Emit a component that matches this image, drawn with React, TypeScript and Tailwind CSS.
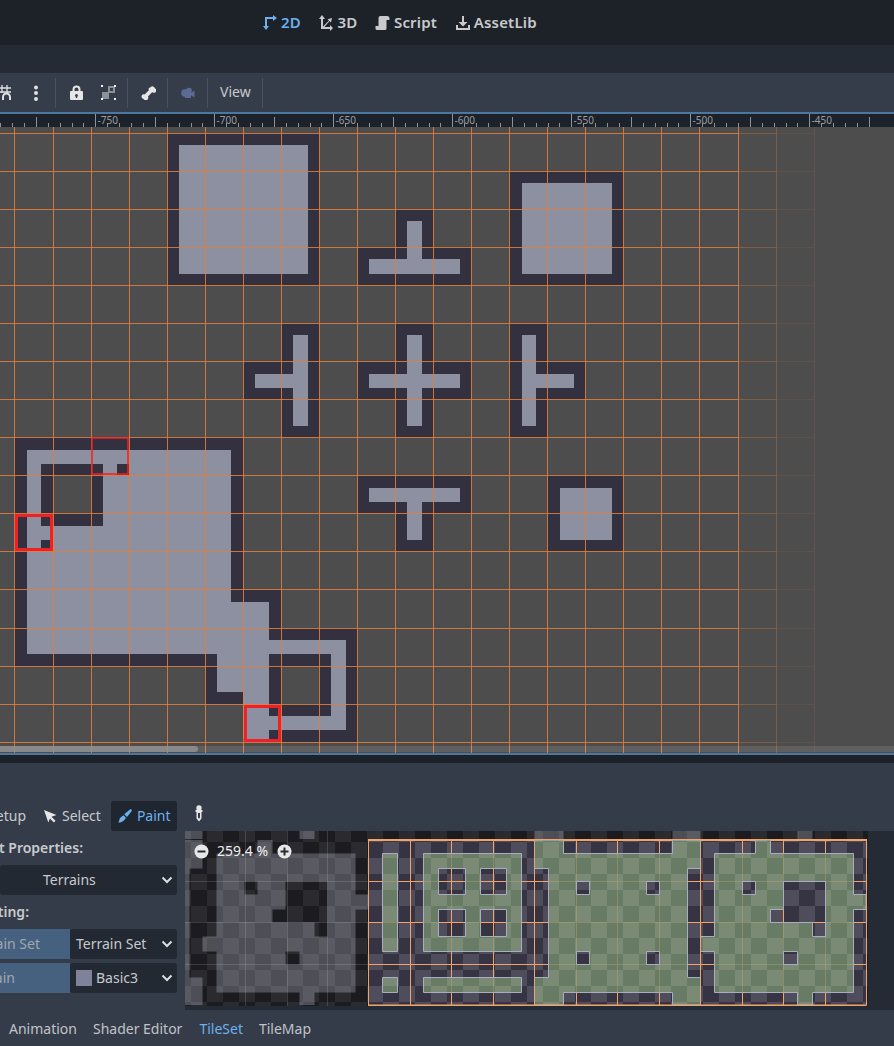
import type { ReactNode } from "react";

const gridX = [14, 53, 91, 129, 167, 205, 243, 281, 319, 357, 395, 433, 471, 509, 547, 585, 623, 661, 699, 738];
const gridY = [133, 171, 209, 247, 285, 323, 361, 399, 437, 475, 513, 551, 589, 628, 666, 704, 742];
const sheetX = [368, 410, 451, 493, 534, 576, 617, 659, 700, 742, 783, 825, 866];
const sheetY = [840, 881, 922, 964, 1005];

const DARK = "#33303f";
const LIGHT = "#8d90a0";
const ORANGE = "#e07c3c";

// [x1, y1, x2, y2]
const darkRects = [
  [167, 133, 319, 285],
  [395, 209, 433, 247],
  [357, 247, 471, 285],
  [509, 171, 623, 285],
  [281, 323, 319, 437],
  [243, 361, 281, 399],
  [395, 323, 433, 437],
  [357, 361, 471, 399],
  [509, 323, 547, 437],
  [547, 361, 585, 399],
  [357, 475, 471, 513],
  [395, 513, 433, 551],
  [547, 475, 623, 551],
  [14, 437, 243, 666],
  [243, 590, 281, 742],
  [205, 666, 243, 704],
  [269, 628, 357, 742],
];
const lightRects = [
  [179, 145, 308, 274],
  [407, 221, 422, 259],
  [369, 259, 460, 274],
  [522, 183, 612, 274],
  [293, 335, 308, 426],
  [255, 374, 293, 388],
  [407, 335, 422, 426],
  [369, 374, 460, 388],
  [522, 335, 536, 426],
  [536, 374, 574, 388],
  [369, 488, 460, 502],
  [407, 502, 422, 540],
  [560, 488, 612, 540],
  [27, 450, 231, 654],
  [231, 602, 269, 654],
  [217, 654, 269, 692],
  [243, 692, 269, 739],
  [269, 640, 346, 654],
  [331, 654, 346, 730],
  [269, 716, 346, 730],
];
const innerDark = [
  [41, 464, 103, 526],
  [269, 654, 331, 716],
  [117, 464, 129, 475],
  [41, 540, 53, 551],
];
const innerBg = [
  [53, 475, 91, 513],
  [281, 666, 319, 704],
];

const shapeE =
  "M534.5 840H563.5V853.5H672.5V840H700.5V868.5H687.5V977.5H700.5V1005H672.5V992.5H563.5V1005H534.5V977.5H548.5V868.5H534.5Z" +
  "M576.5 881.5H589.5V894.5H576.5Z M576.5 951.5H589.5V964.5H576.5Z M646.5 881.5H659.5V894.5H646.5Z M646.5 951.5H659.5V964.5H646.5Z";
const shapeF =
  "M714.5 853.5H755.5V840H770.5V853.5H853.5V894.5H866V909.5H853.5V992.5H812.5V1005H797.5V992.5H714.5V951.5H700.5V936.5H714.5Z" +
  "M742.5 881.5H755.5V894.5H742.5Z M783.5 881.5H825.5V936.5H812.5V922.5H770.5V909.5H783.5Z M783.5 951.5H797.5V964.5H783.5Z";
const shapesLeft =
  "M382.5 853.5H397.5V951.5H382.5Z M382.5 977.5H397.5V992.5H382.5Z M423.5 977.5H521.5V992.5H423.5Z" +
  "M423.5 853.5H521.5V951.5H423.5Z M438.5 868.5H465.5V894.5H438.5Z M480.5 868.5H506.5V894.5H480.5Z M438.5 909.5H465.5V936.5H438.5Z M480.5 909.5H506.5V936.5H480.5Z";

function Box({ r, fill }: { r: number[]; fill: string }) {
  return <rect x={r[0]} y={r[1]} width={r[2] - r[0]} height={r[3] - r[1]} fill={fill} />;
}

function Checker({ id, a, b, x = 383, y = 842 }: { id: string; a: string; b: string; x?: number; y?: number }) {
  return (
    <pattern id={id} patternUnits="userSpaceOnUse" x={x} y={y} width="32" height="32">
      <rect width="32" height="32" fill={b} />
      <rect width="16" height="16" fill={a} />
      <rect x="16" y="16" width="16" height="16" fill={a} />
    </pattern>
  );
}

function Ruler() {
  const ticks = Array.from({ length: 76 }, (_, i) => i);
  const labels = ["-750", "-700", "-650", "-600", "-550", "-500", "-450"];
  return (
    <svg width="894" height="13" viewBox="0 0 894 13" className="bg-[#1c2229]">
      {ticks.map((i) => {
        const x = Math.round(-23.7 + i * 11.9);
        const h = i % 10 === 0 ? 13 : i % 5 === 0 ? 10 : 4;
        return <rect key={i} x={x} y={13 - h} width="1" height={h} fill="#8f9297" />;
      })}
      {labels.map((t, i) => (
        <text key={t} x={97.5 + i * 119} y="10" fontSize="10" fill="#9a9da2" fontFamily="Noto Sans">
          {t}
        </text>
      ))}
    </svg>
  );
}

function Canvas() {
  return (
    <svg width="894" height="626" viewBox="0 127 894 626" className="bg-[#4d4d4d]">
      {darkRects.map((r, i) => <Box key={i} r={r} fill={DARK} />)}
      {lightRects.map((r, i) => <Box key={i} r={r} fill={LIGHT} />)}
      {innerDark.map((r, i) => <Box key={i} r={r} fill={DARK} />)}
      {innerBg.map((r, i) => <Box key={i} r={r} fill="#4d4d4d" />)}

      {gridX.map((x) => <rect key={x} x={x} y="127" width="1" height="626" fill={ORANGE} opacity="0.88" />)}
      <rect x="776" y="127" width="1" height="626" fill={ORANGE} opacity="0.35" />
      <rect x="814" y="127" width="1" height="626" fill={ORANGE} opacity="0.1" />
      {gridY.map((y) => (
        <g key={y}>
          <rect x="0" y={y} width="738" height="1" fill={ORANGE} opacity="0.88" />
          <rect x="738" y={y} width="38" height="1" fill={ORANGE} opacity="0.35" />
          <rect x="776" y={y} width="38" height="1" fill={ORANGE} opacity="0.1" />
        </g>
      ))}

      <rect x="92" y="438" width="36" height="36" fill="none" stroke="#ee2028" strokeWidth="1.5" />
      <rect x="16.5" y="515.5" width="35" height="34" fill="none" stroke="#ee2028" strokeWidth="3" />
      <rect x="245.5" y="706.5" width="34" height="34" fill="none" stroke="#ee2028" strokeWidth="3" />
    </svg>
  );
}

function TileView() {
  return (
    <svg width="709" height="179" viewBox="185 831 709 179" className="bg-[#252b34]">
      <defs>
        <Checker id="sheetDark" a="#4f4d5c" b="#363342" />
        <Checker id="sheetGreen" a="#82967a" b="#72896a" />
        <Checker id="dimDark" a="#2b2a2e" b="#1c1c20" />
        <Checker id="dimLightShift" a="#5a5b62" b="#4e4f56" x={881} />
        <Checker id="dimLightUp" a="#5a5b62" b="#4e4f56" y={1008} />
        <Checker id="dimLightUpShift" a="#5a5b62" b="#4e4f56" x={881} y={1008} />
        <clipPath id="topStrip"><rect x="185" y="831" width="682" height="9" /></clipPath>
      </defs>

      {/* dimmed part of the atlas, outside the selected sheet */}
      <rect x="185" y="831" width="683" height="175" fill="url(#dimDark)" />
      <g transform="translate(-498 0)" fillRule="evenodd">
        <path d={shapeE} fill="url(#dimLightShift)" />
        <path d={shapeF} fill="url(#dimLightShift)" />
      </g>
      <g clipPath="url(#topStrip)">
        <g transform="translate(0 -166)" fillRule="evenodd">
          <path d={shapeE} fill="url(#dimLightUp)" />
          <path d={shapeF} fill="url(#dimLightUp)" />
        </g>
        <g transform="translate(-498 -166)" fillRule="evenodd">
          <path d={shapeE} fill="url(#dimLightUpShift)" />
          <path d={shapeF} fill="url(#dimLightUpShift)" />
        </g>
      </g>
      {[245, 287, 327].map((x) => <rect key={x} x={x} y="831" width="1" height="175" fill="#ffffff" opacity="0.14" />)}
      {[881, 922, 964].map((y) => <rect key={y} x="185" y={y} width="183" height="1" fill="#ffffff" opacity="0.14" />)}

      {/* the sheet itself */}
      <rect x="368" y="840" width="498" height="165" fill="url(#sheetDark)" />
      {sheetX.map((x) => <rect key={x} x={x} y="840" width="1" height="165" fill="#f2a468" />)}
      {sheetY.map((y) => <rect key={y} x="368" y={y} width="498" height="1" fill="#f2a468" />)}
      <path d={shapesLeft + shapeE + shapeF} fill="url(#sheetGreen)" fillOpacity="0.84" fillRule="evenodd" stroke="#a9adc0" strokeWidth="1" />
      <rect x="368.5" y="839.5" width="498" height="165.5" fill="none" stroke="#f2a468" />
      <rect x="534" y="840" width="1" height="165" fill="#f2a468" opacity="0.7" />
      <rect x="700" y="840" width="1" height="165" fill="#f2a468" opacity="0.7" />
    </svg>
  );
}

function Chevron() {
  return (
    <svg width="12" height="8" viewBox="0 0 12 8" className="shrink-0">
      <path d="M1.5 1.5 6 6l4.5-4.5" fill="none" stroke="#dcdde0" strokeWidth="2" />
    </svg>
  );
}

function Select({ children, className }: { children: ReactNode; className: string }) {
  return (
    <div className={"flex items-center h-[30px] bg-[#222932] rounded-[3px] text-[#c8cacd] text-[14px] " + className}>
      {children}
    </div>
  );
}

function TopTab({ icon, label, active }: { icon: ReactNode; label: string; active?: boolean }) {
  return (
    <div className={"flex items-center gap-[3px] text-[15px] tracking-[0.2px] font-semibold " + (active ? "text-[#6cb0ee]" : "text-[#c8cacd]")}>
      {icon}
      <span>{label}</span>
    </div>
  );
}

function Sep() {
  return <div className="w-px h-[30px] bg-[#4a515d] shrink-0" />;
}

export default function App() {
  return (
    <div className="w-[894px] h-[1046px] overflow-hidden flex flex-col bg-[#353c49] [font-family:'Noto_Sans',sans-serif]">
      {/* main screen tabs */}
      <header className="h-[45px] bg-[#1d2229] flex items-center pl-[262px] shrink-0">
        <div className="flex items-center gap-[17.5px]">
          <TopTab
            active
            label="2D"
            icon={
              <svg width="16" height="16" viewBox="0 0 16 16" fill="#6cb0ee">
                <path d="M3 12V2h9v2H5v8z" />
                <path d="M1 11h6l-3 4zM11 0l4 3-4 3z" />
              </svg>
            }
          />
          <TopTab
            label="3D"
            icon={
              <svg width="16" height="16" viewBox="0 0 16 16" fill="#c8cacd">
                <path d="M3 4h2v7.600L11 5.600 9.600 4.200 14 3l-1 4.400-1.400-1.400L6.400 12H12v-2l3 3-3 3v-2H3z" />
                <path d="M4 0l3 4H1z" />
              </svg>
            }
          />
          <TopTab
            label="Script"
            icon={
              <svg width="16" height="16" viewBox="0 0 16 16" fill="#c8cacd">
                <path d="M5.500 1H12a2.500 2.500 0 0 1 2.500 2.500V5H11.500v8.500a1.500 1.500 0 0 1-1.500 1.500H2a1.500 1.500 0 0 1-1.500-1.500V11H3.500V3a2 2 0 0 1 2-2z" />
              </svg>
            }
          />
          <TopTab
            label="AssetLib"
            icon={
              <svg width="16" height="16" viewBox="0 0 16 16" fill="#c8cacd">
                <path d="M7 1h2v6h3.500L8 11.500 3.500 7H7zM1 10h2v3h10v-3h2v5H1z" />
              </svg>
            }
          />
        </div>
      </header>
      <div className="h-[28px] bg-[#242b35] shrink-0" />

      {/* 2D editor toolbar */}
      <div className="h-[39px] bg-[#363d4a] flex items-center shrink-0 overflow-hidden text-[14px] text-[#c8cacd]">
        <svg width="14" height="16" viewBox="0 0 14 16" className="ml-[-1px] shrink-0" fill="none" stroke="#e0e0e0" strokeWidth="1.300">
          <path d="M0 3h12M0 7h12M3 0v8M8 0v8" />
          <path d="M4 15v-3a3.500 3.500 0 0 1 7 0v3" strokeWidth="2" />
        </svg>
        <svg width="6" height="16" viewBox="0 0 6 16" className="ml-[20px] shrink-0" fill="#e0e0e0">
          <circle cx="3" cy="2.500" r="2" />
          <circle cx="3" cy="8" r="2" />
          <circle cx="3" cy="14" r="2" />
        </svg>
        <div className="ml-[16px]"><Sep /></div>
        <svg width="13" height="15" viewBox="0 0 13 15" className="ml-[14px] shrink-0" fillRule="evenodd" fill="#e6e6e6">
          <path d="M2.500 6V4.500a4 4 0 0 1 8 0V6H12a1 1 0 0 1 1 1v7a1 1 0 0 1-1 1H1a1 1 0 0 1-1-1V7a1 1 0 0 1 1-1zm2 0h4V4.500a2 2 0 0 0-4 0zM6.500 9a1.500 1.500 0 0 0-.7 2.800V13h1.400v-1.200A1.500 1.500 0 0 0 6.500 9z" />
        </svg>
        <svg width="16" height="16" viewBox="0 0 16 16" className="ml-[18px] shrink-0">
          <path d="M1 7h7v7H1z" fill="#8d9299" />
          <path d="M7 1h7v7H7zM9 3v3h3V3z" fill="#8d9299" fillRule="evenodd" />
          <path d="M0 0h2v2H0zM13 0h2v2h-2zM0 13h2v2H0zM13 13h2v2h-2z" fill="#f2f2f2" />
        </svg>
        <div className="ml-[10px]"><Sep /></div>
        <svg width="15" height="15" viewBox="0 0 15 15" className="ml-[13px] shrink-0" fill="#e6e6e6">
          <path d="M9.600 2.300a2.400 2.400 0 0 1 4.300 1 2.400 2.400 0 0 1-.7 4.500c-.8.200-1.500-.2-2.100-.5L7 11.500c.3.700.5 1.400.2 2.100a2.400 2.400 0 0 1-4.500.3 2.400 2.400 0 0 1-1.300-4.200c.7-.6 1.500-.5 2.200-.2l4.300-4.300c-.3-.7-.5-1.500.1-2.300z" />
        </svg>
        <div className="ml-[11px]"><Sep /></div>
        <svg width="14" height="12" viewBox="0 0 14 12" className="ml-[13px] shrink-0" fill="#5a6b95">
          <circle cx="4" cy="6" r="3.800" />
          <circle cx="8" cy="3.500" r="2.800" />
          <path d="M4 5h6v6H4zM9.500 6l4-2.500v7l-4-2.500z" />
        </svg>
        <div className="ml-[12px]"><Sep /></div>
        <span className="ml-[12px] mb-[2px]">View</span>
        <div className="ml-[11px]"><Sep /></div>
      </div>
      <div className="h-[2px] bg-[#4b77a0] shrink-0" />
      <div className="h-[13px] shrink-0"><Ruler /></div>

      {/* viewport */}
      <div className="relative h-[626px] shrink-0">
        <Canvas />
        <div className="absolute left-0 right-0 top-[619px] h-[6px] bg-white/10">
          <div className="w-[198px] h-full rounded-r-[3px] bg-[#8e8e8e]/90" />
        </div>
      </div>
      <div className="h-[2px] bg-[#4b77a0] shrink-0" />
      <div className="h-[8px] bg-[#1d2229] shrink-0" />

      {/* TileSet bottom panel */}
      <div className="flex-1 flex flex-col min-h-0 pt-[38px]">
        <div className="h-[30px] flex items-center text-[14px] shrink-0">
          <div className="w-[44px] shrink-0 flex justify-end pr-[18px] mb-[2px] overflow-hidden whitespace-nowrap text-[#c8cacd]">Setup</div>
          <svg width="13" height="13" viewBox="0 0 13 13" fill="#e6e6e6" className="shrink-0">
            <path d="M0 0l12.500 5-5 1.800 4 4-1.600 1.700-4-4L4.300 12.500z" />
          </svg>
          <span className="ml-[5px] mb-[2px] text-[#c8cacd]">Select</span>
          <div className="ml-[10px] h-[30px] w-[66px] rounded-[3px] bg-[#20262f] flex items-center pl-[7px] gap-[5px] text-[#6cb0ee]">
            <svg width="14" height="14" viewBox="0 0 14 14" fill="#6cb0ee">
              <path d="M12.200.3a1.200 1.200 0 0 1 1.500 1.600L9 8 6.200 5.300zM5.300 6.200 8 8.800 6.800 10.500C5.500 12.400 3 13.600.3 13.600c1.200-1.400.6-3 1.800-4.600z" />
            </svg>
            <span className="mb-[2px]">Paint</span>
          </div>
          <svg width="8" height="17" viewBox="0 0 8 17" className="ml-[18px] mt-[-5px] shrink-0" fill="#e6e6e6">
            <circle cx="4" cy="3" r="2.700" />
            <path d="M.5 5h7v2H6.500v6.500L4 16.500 1.500 13.500V7h-1zM3 8v4.500l1 1.200 1-1.200V8z" fillRule="evenodd" />
          </svg>
        </div>

        <div className="h-[179px] flex shrink-0">
          <div className="w-[177px] shrink-0 text-[14px]">
            <div className="h-[34px] flex items-center justify-end pr-[94px] pb-[2px] whitespace-nowrap overflow-hidden font-semibold text-[#c8cacd]">Paint Properties:</div>
            <Select className="pl-[43px] pr-[4px] justify-between">
              <span className="mb-[2px]">Terrains</span>
              <Chevron />
            </Select>
            <div className="h-[34px] flex items-center justify-end pr-[148px] pb-[2px] whitespace-nowrap overflow-hidden font-semibold text-[#c8cacd]">Painting:</div>
            <div className="flex h-[30px]">
              <div className="w-[70px] flex items-center justify-end pr-[30px] pb-[2px] whitespace-nowrap overflow-hidden bg-[#45617f] text-[#9fa7b0]">Terrain Set</div>
              <Select className="w-[107px] pl-[6px] pr-[4px] justify-between">
                <span className="mb-[2px]">Terrain Set</span>
                <Chevron />
              </Select>
            </div>
            <div className="flex h-[30px] mt-[4px]">
              <div className="w-[70px] flex items-center justify-end pr-[55px] pb-[2px] whitespace-nowrap overflow-hidden bg-[#45617f] text-[#9fa7b0]">Terrain</div>
              <Select className="w-[107px] pl-[6px] pr-[4px]">
                <span className="w-[16px] h-[16px] bg-[#7f8298] shrink-0" />
                <span className="ml-[4px] mb-[2px]">Basic3</span>
                <span className="ml-auto"><Chevron /></span>
              </Select>
            </div>
          </div>

          <div className="relative ml-[8px]">
            <TileView />
            <div className="absolute left-[9px] top-[9px] flex items-center text-[14px] text-[#f0f0f0]">
              <svg width="15" height="15" viewBox="0 0 15 15">
                <circle cx="7.500" cy="7.500" r="7" fill="#e8e8e8" />
                <rect x="3.500" y="6.500" width="8" height="2" fill="#2b2b2f" />
              </svg>
              <span className="ml-[8px] w-[60px] mb-[2px]">259.4 %</span>
              <svg width="15" height="15" viewBox="0 0 15 15">
                <circle cx="7.500" cy="7.500" r="7" fill="#e8e8e8" />
                <path d="M3.500 6.500h3v-3h2v3h3v2h-3v3h-2v-3h-3z" fill="#2b2b2f" />
              </svg>
            </div>
          </div>
        </div>

        <div className="flex-1 flex items-center pl-[9px] text-[14px] text-[#c0c3c8]">
          <span>Animation</span>
          <span className="ml-[16px]">Shader Editor</span>
          <span className="ml-[17px] text-[#6cb0ee]">TileSet</span>
          <span className="ml-[16px]">TileMap</span>
        </div>
      </div>
    </div>
  );
}
